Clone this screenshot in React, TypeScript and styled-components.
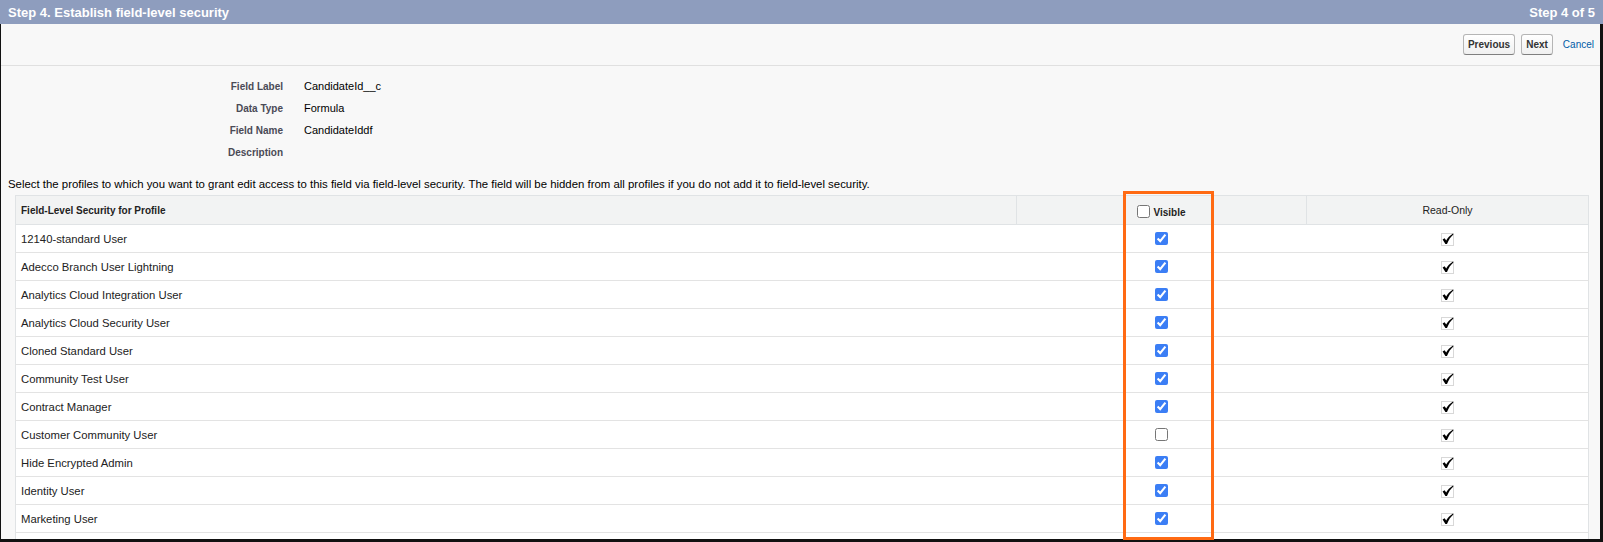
import React from "react";
import styled, { createGlobalStyle } from "styled-components";

const Global = createGlobalStyle`
  html, body { margin: 0; padding: 0; background: #ffffff; }
  body { font-family: "Liberation Sans", Arial, sans-serif; }
  * { box-sizing: border-box; }
`;

const Frame = styled.div`
  position: relative;
  width: 1603px;
  height: 542px;
  display: flex;
  flex-direction: column;
  overflow: hidden;
  background: #f8f8f8;
`;

const Header = styled.div`
  height: 24px;
  flex: 0 0 24px;
  background: #8e9dbe;
  color: #ffffff;
  display: flex;
  align-items: center;
  justify-content: space-between;
  padding: 0 8px;
  font-size: 13px;
  font-weight: bold;
`;

const Body = styled.div`
  flex: 1;
  border-left: 1px solid #111;
  border-right: 3px solid #111;
  border-bottom: 3px solid #111;
  overflow: hidden;
`;

const ButtonBar = styled.div`
  height: 42px;
  border-bottom: 1px solid #e0e0e0;
  display: flex;
  align-items: center;
  justify-content: flex-end;
  gap: 6px;
  padding-right: 6px;
`;

const Button = styled.button`
  height: 21px;
  padding: 0 4px;
  font-family: "Liberation Sans", Arial, sans-serif;
  font-size: 10px;
  font-weight: bold;
  color: #333;
  background: linear-gradient(#ffffff, #f0f0f0);
  border: 1px solid #b5b5b5;
  border-bottom-color: #7f7f7f;
  border-radius: 3px;
`;

const CancelLink = styled.a`
  margin-left: 4px;
  font-size: 10px;
  color: #015ba7;
  text-decoration: none;
`;

const Details = styled.div`
  padding-top: 9px;
`;

const DetailRow = styled.div`
  display: grid;
  grid-template-columns: 282px 1fr;
  height: 22px;
  align-items: center;
`;

const DetailLabel = styled.div`
  text-align: right;
  font-size: 10px;
  font-weight: bold;
  color: #4a4a56;
`;

const DetailValue = styled.div`
  padding-left: 21px;
  font-size: 11px;
  color: #000;
`;

const Intro = styled.div`
  margin: 14px 0 4px 7px;
  height: 14px;
  line-height: 14px;
  font-size: 11.4px;
  color: #000;
`;

const Table = styled.table`
  margin: 0 11px 0 14px;
  width: 1574px;
  table-layout: fixed;
  border-collapse: collapse;
  background: #fff;
  border: 1px solid #e0e3e5;
`;

const Th = styled.th<{ $align?: string; $bold?: boolean }>`
  height: 29px;
  padding: 0 5px;
  background: #f2f3f3;
  border: 1px solid #e0e3e5;
  font-size: ${(p) => (p.$bold === false ? "10.5px" : "10px")};
  font-weight: ${(p) => (p.$bold === false ? "normal" : "bold")};
  color: #222;
  text-align: ${(p) => p.$align || "left"};
  vertical-align: middle;
`;

const HeaderCheck = styled.span`
  display: inline-flex;
  align-items: flex-end;
  padding-top: 4px;
`;

const Td = styled.td<{ $align?: string }>`
  height: 28px;
  padding: 0 5px;
  border-bottom: 1px solid #e3e3e3;
  font-size: 11.3px;
  color: #222;
  text-align: ${(p) => p.$align || "left"};
  vertical-align: middle;
`;

const Check = styled.input`
  width: 13px;
  height: 13px;
  margin: 0;
  vertical-align: middle;
  accent-color: #3b7ef5;
`;

const HeadCheck = styled(Check)`
  margin-right: 3px;
`;

const ReadOnlyIcon = styled.svg`
  display: inline-block;
  vertical-align: middle;
  margin-top: 1px;
`;

const Callout = styled.div`
  position: absolute;
  left: 1123px;
  top: 191px;
  width: 91px;
  height: 349px;
  border: 3px solid #ff6a13;
  pointer-events: none;
`;

const CheckedImg = () => (
  <ReadOnlyIcon width="13" height="13" viewBox="0 0 13 13">
    <rect x="0.5" y="0.5" width="12" height="12" fill="none" stroke="#b0b0b0" strokeWidth="1" strokeDasharray="1 1" />
    <path d="M1.6 6.4 L3.6 5.2 L5.2 7.6 C6.8 5 8.6 2.8 12 0.6 L12.4 1.4 C9.6 3.8 7.6 6.8 6 11 L4.4 11 Z" fill="#000" />
  </ReadOnlyIcon>
);

const profiles: { name: string; visible: boolean }[] = [
  { name: "12140-standard User", visible: true },
  { name: "Adecco Branch User Lightning", visible: true },
  { name: "Analytics Cloud Integration User", visible: true },
  { name: "Analytics Cloud Security User", visible: true },
  { name: "Cloned Standard User", visible: true },
  { name: "Community Test User", visible: true },
  { name: "Contract Manager", visible: true },
  { name: "Customer Community User", visible: false },
  { name: "Hide Encrypted Admin", visible: true },
  { name: "Identity User", visible: true },
  { name: "Marketing User", visible: true },
];

const details: [string, string][] = [
  ["Field Label", "CandidateId__c"],
  ["Data Type", "Formula"],
  ["Field Name", "CandidateIddf"],
  ["Description", ""],
];

export default function App() {
  return (
    <Frame>
      <Global />
      <Header>
        <span>Step 4. Establish field-level security</span>
        <span>Step 4 of 5</span>
      </Header>
      <Body>
        <ButtonBar>
          <Button>Previous</Button>
          <Button>Next</Button>
          <CancelLink href="#">Cancel</CancelLink>
        </ButtonBar>
        <Details>
          {details.map(([label, value]) => (
            <DetailRow key={label}>
              <DetailLabel>{label}</DetailLabel>
              <DetailValue>{value}</DetailValue>
            </DetailRow>
          ))}
        </Details>
        <Intro>
          Select the profiles to which you want to grant edit access to this field via field-level security. The field will be hidden from all profiles if you do not add it to field-level security.
        </Intro>
        <Table>
          <colgroup>
            <col style={{ width: 1001 }} />
            <col style={{ width: 290 }} />
            <col />
          </colgroup>
          <thead>
            <tr>
              <Th>Field-Level Security for Profile</Th>
              <Th $align="center">
                <HeaderCheck>
                  <HeadCheck type="checkbox" readOnly />
                  Visible
                </HeaderCheck>
              </Th>
              <Th $align="center" $bold={false}>Read-Only</Th>
            </tr>
          </thead>
          <tbody>
            {profiles.map((p) => (
              <tr key={p.name}>
                <Td>{p.name}</Td>
                <Td $align="center">
                  <Check type="checkbox" checked={p.visible} readOnly />
                </Td>
                <Td $align="center">
                  <CheckedImg />
                </Td>
              </tr>
            ))}
            <tr>
              <Td />
              <Td />
              <Td />
            </tr>
          </tbody>
        </Table>
      </Body>
      <Callout />
    </Frame>
  );
}
